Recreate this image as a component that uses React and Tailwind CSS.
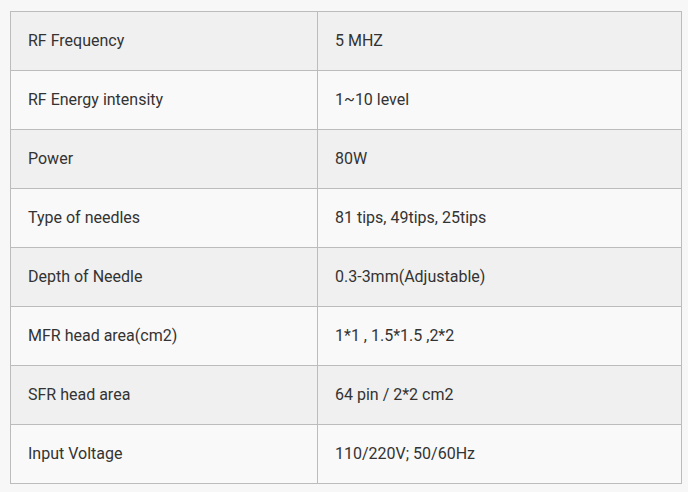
const specs = [
  ["RF Frequency", "5 MHZ"],
  ["RF Energy intensity", "1~10 level"],
  ["Power", "80W"],
  ["Type of needles", "81 tips, 49tips, 25tips"],
  ["Depth of Needle", "0.3-3mm(Adjustable)"],
  ["MFR head area(cm2)", "1*1 , 1.5*1.5 ,2*2"],
  ["SFR head area", "64 pin / 2*2 cm2"],
  ["Input Voltage", "110/220V; 50/60Hz"],
]

export default function App() {
  return (
    <div className="min-h-screen w-full bg-[#f7f7f7] pt-[11px] pl-[10px] font-['Roboto',sans-serif]">
      <table className="w-[672px] border-collapse border border-[#bcbcbc] text-[16px] text-[#333333]">
        <tbody>
          {specs.map((row, i) => (
            <tr key={row[0]} className={i % 2 === 0 ? "bg-[#f0f0f0]" : "bg-[#f9f9f9]"}>
              <td className="h-[59px] w-[307px] border border-[#bcbcbc] pl-[17px] align-middle">{row[0]}</td>
              <td className="h-[59px] border border-[#bcbcbc] pl-[17px] align-middle">{row[1]}</td>
            </tr>
          ))}
        </tbody>
      </table>
    </div>
  )
}
